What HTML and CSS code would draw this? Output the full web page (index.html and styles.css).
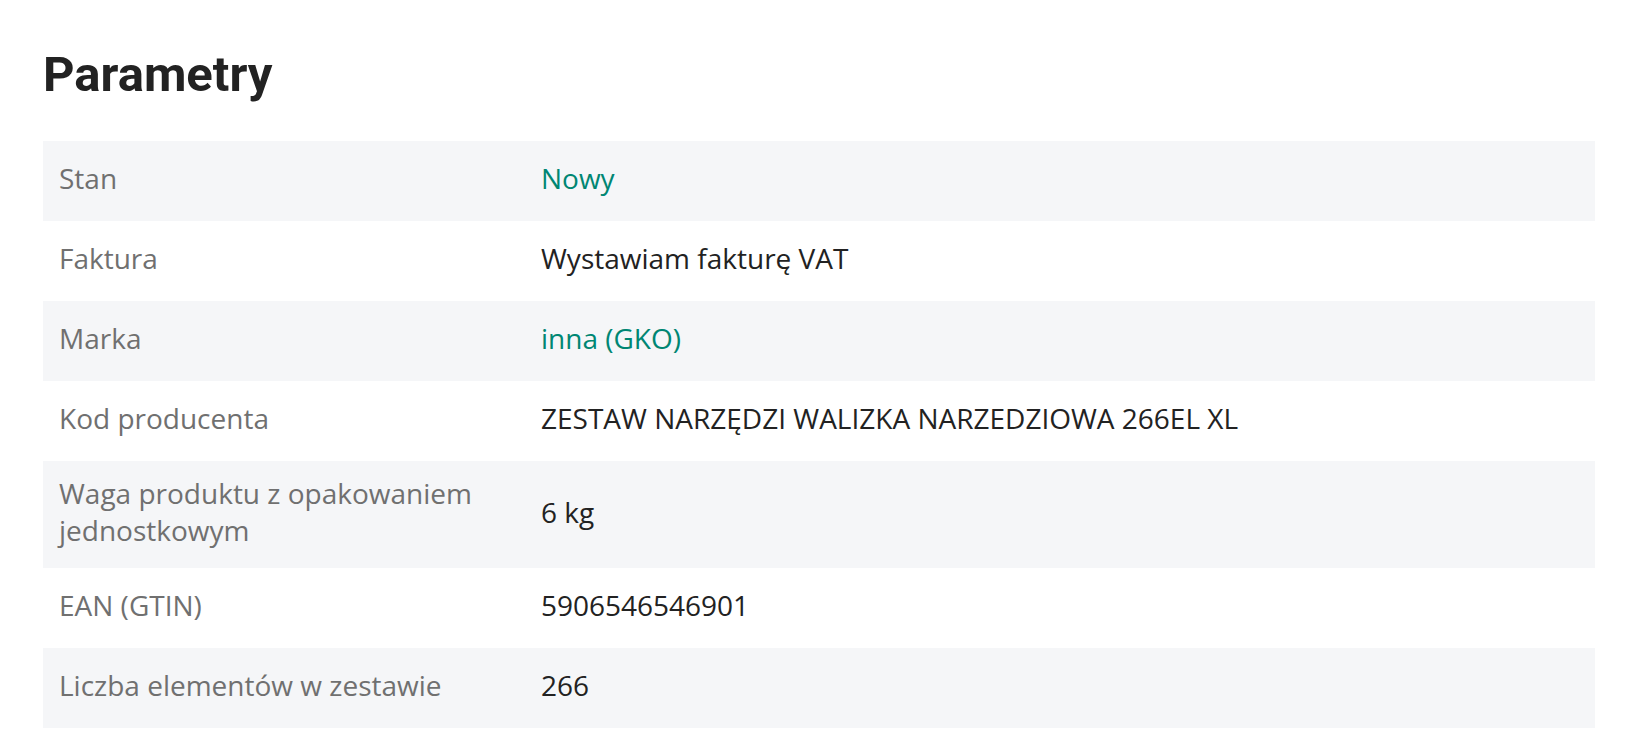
FILE: index.html
```html
<!DOCTYPE html>
<html>
<head>
  <title>Parametry</title>
  <link rel="stylesheet" href="styles.css">
</head>
<body>

<section class="params">
  <h1>Parametry</h1>
  <div class="table">
    <div class="row">
      <div class="name">Stan</div>
      <div class="value link">Nowy</div>
    </div>
    <div class="row">
      <div class="name">Faktura</div>
      <div class="value">Wystawiam fakturę VAT</div>
    </div>
    <div class="row">
      <div class="name">Marka</div>
      <div class="value link">inna (GKO)</div>
    </div>
    <div class="row">
      <div class="name">Kod producenta</div>
      <div class="value">ZESTAW NARZĘDZI WALIZKA NARZEDZIOWA 266EL XL</div>
    </div>
    <div class="row">
      <div class="name">Waga produktu z opakowaniem jednostkowym</div>
      <div class="value">6 kg</div>
    </div>
    <div class="row">
      <div class="name">EAN (GTIN)</div>
      <div class="value">5906546546901</div>
    </div>
    <div class="row">
      <div class="name">Liczba elementów w zestawie</div>
      <div class="value">266</div>
    </div>
  </div>
</section>

</body>
</html>
```

FILE: styles.css
```css
body {
  margin: 0;
  background: #fff;
  font-family: "Open Sans", "Liberation Sans", sans-serif;
  color: #222;
}
.params {
  padding: 47px 37px 0 43px;
}
h1 {
  font-family: Roboto, "Liberation Sans", sans-serif;
  font-weight: 700;
  font-size: 49px;
  line-height: 56px;
  margin: 0 0 38px;
  color: #222;
}
.row {
  display: grid;
  grid-template-columns: 482px 1fr;
  align-items: center;
  min-height: 80px;
  box-sizing: border-box;
  padding: 14px 16px 19px;
  font-size: 28px;
  line-height: 37px;
}
.row:nth-child(odd) {
  background: #f5f6f8;
}
.name {
  color: #707070;
  padding-right: 24px;
}
.value {
  color: #222;
}
.value.link {
  color: #008673;
}
```
